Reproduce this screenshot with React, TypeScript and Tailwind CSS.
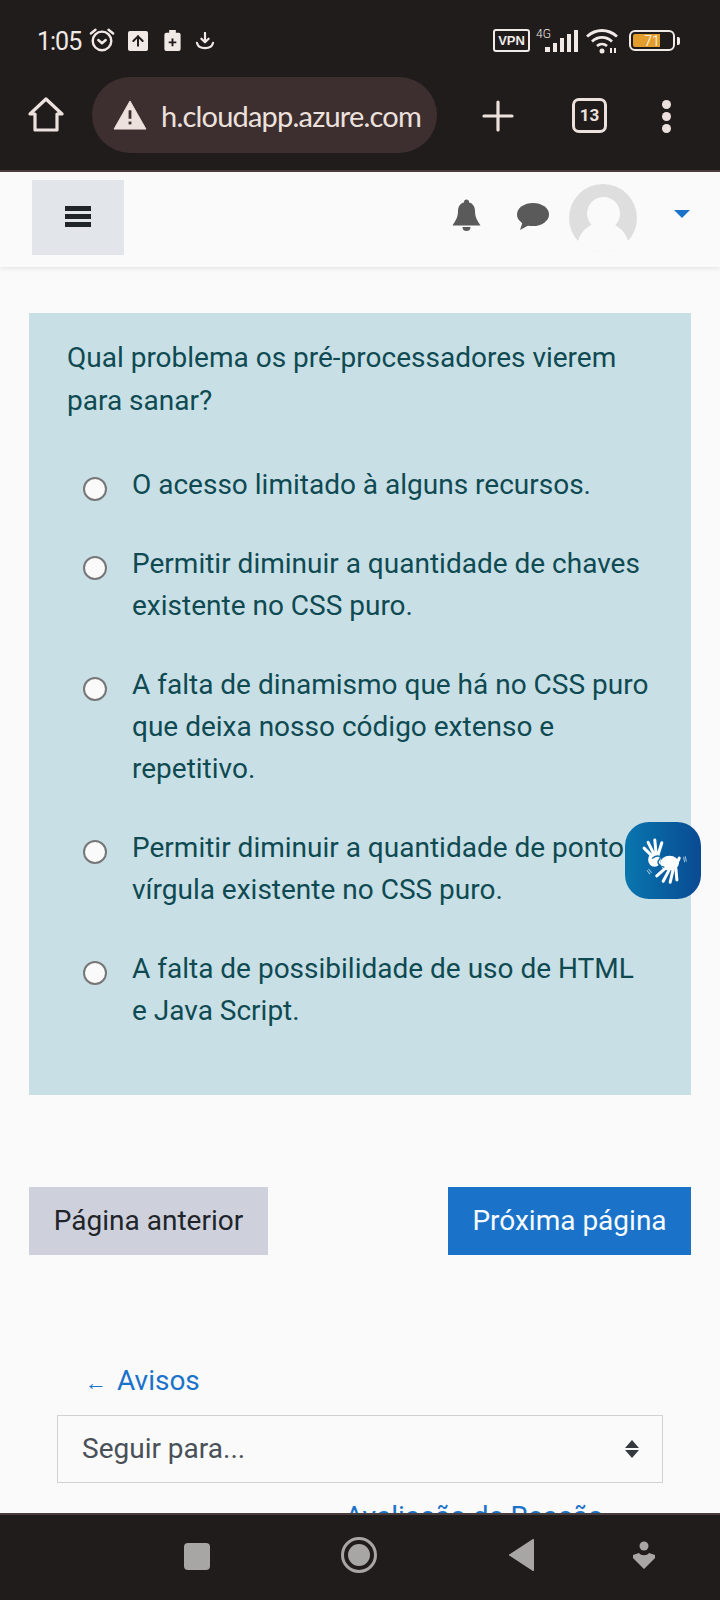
import React from "react";
import { ArrowUp, Plus } from "lucide-react";

const options = [
  "O acesso limitado à alguns recursos.",
  "Permitir diminuir a quantidade de chaves existente no CSS puro.",
  "A falta de dinamismo que há no CSS puro que deixa nosso código extenso e repetitivo.",
  "Permitir diminuir a quantidade de ponto e vírgula existente no CSS puro.",
  "A falta de possibilidade de uso de HTML e Java Script.",
];

function StatusBar() {
  return (
    <div className="h-[76px] flex items-start pt-[28px] pl-[37px] pr-[40px] text-[#f1e9e6]">
      <span className="text-[25px] leading-[28px] tracking-[-1px] font-['Roboto',sans-serif]">1:05</span>
      {/* alarme */}
      <svg className="ml-[7px] -mt-[1px] w-[28px] h-[26px]" viewBox="0 0 30 28" fill="none" stroke="currentColor" strokeWidth="2.6">
        <circle cx="15" cy="15" r="10" />
        <path d="M3 7l5-4M27 7l-5-4" strokeLinecap="round" />
        <path d="M11 14l4 3.5 4-3.5" strokeLinecap="round" strokeLinejoin="round" />
      </svg>
      <div className="ml-[12px] mt-[3px] w-[20px] h-[20px] rounded-[2px] bg-[#f1e9e6] flex items-center justify-center">
        <ArrowUp className="w-[16px] h-[16px] text-[#211c1c]" strokeWidth={3} />
      </div>
      <svg className="ml-[16px] mt-[2px] w-[17px] h-[21px]" viewBox="0 0 17 22">
        <path d="M5 0h7v3h3a2 2 0 0 1 2 2v15a2 2 0 0 1-2 2H2a2 2 0 0 1-2-2V5a2 2 0 0 1 2-2h3z" fill="currentColor" />
        <path d="M8.500 9v8M4.500 13h8" stroke="#211c1c" strokeWidth="2" />
      </svg>
      <svg className="ml-[14px] mt-[4px] w-[20px] h-[18px]" viewBox="0 0 20 20" fill="none" stroke="currentColor" strokeWidth="2.4">
        <path d="M10 1v10M6 7.500l4 4 4-4" strokeLinecap="round" strokeLinejoin="round" />
        <path d="M1 12c1 4 5 6 9 6s8-2 9-6" strokeLinecap="round" />
      </svg>
      <div className="ml-auto flex items-start">
        <div className="mt-[1px] w-[37px] h-[23px] border-2 border-[#f1e9e6] rounded-[3px] flex items-center justify-center text-[13px] font-bold leading-none font-['Liberation_Sans',sans-serif]">
          VPN
        </div>
        <div className="relative ml-[6px] w-[43px] h-[24px]">
          <span className="absolute left-0 -top-[1px] text-[12px] leading-[14px] font-light font-['Roboto',sans-serif]">4G</span>
          <div className="absolute left-[9px] bottom-0 flex items-end gap-[3px]">
            <div className="w-[5px] h-[5px] bg-[#f1e9e6]" />
            <div className="w-[4px] h-[9px] bg-[#f1e9e6]" />
            <div className="w-[4px] h-[14px] bg-[#f1e9e6]" />
            <div className="w-[4px] h-[18px] bg-[#f1e9e6]" />
            <div className="w-[4px] h-[22px] bg-[#f1e9e6]" />
          </div>
        </div>
        <svg className="ml-[6px] w-[34px] h-[26px]" viewBox="0 0 34 26" fill="none" stroke="currentColor" strokeWidth="2.8">
          <path d="M2 8.500C11 .500 23 .500 32 8.500M7 13.500c6-5.500 14-5.500 20 0M12 18c3-2.500 7-2.500 10 0" />
          <circle cx="17" cy="23" r="2.500" fill="currentColor" stroke="none" />
          <path d="M26 20v5M30 20v5" strokeWidth="2" />
        </svg>
        <div className="ml-[10px] mt-[2px] w-[46px] h-[21px] border-2 border-[#f1e9e6] rounded-[6px] p-[2px]">
          <div className="w-[27px] h-full bg-[#e39d2b] rounded-l-[2px] flex items-center justify-end text-[14px] leading-none text-[#f4e7d2] font-['Roboto',sans-serif]">
            71
          </div>
        </div>
        <div className="ml-[2px] mt-[9px] w-[3px] h-[8px] bg-[#f1e9e6] rounded-r-[2px]" />
      </div>
    </div>
  );
}

function BrowserBar() {
  return (
    <div className="h-[94px] flex items-start text-[#ede1de]">
      <svg className="ml-[28px] mt-[21px] w-[36px] h-[36px]" viewBox="0 0 36 36" fill="none" stroke="currentColor" strokeWidth="3.2" strokeLinejoin="round" strokeLinecap="round">
        <path d="M2 17L18 2l16 15h-5v16H7V17z" />
      </svg>
      <div className="ml-[28px] mt-[1px] w-[345px] h-[76px] rounded-full bg-[#3d2f2f] flex items-center pl-[21px]">
        <svg className="w-[34px] h-[30px]" viewBox="0 0 36 32">
          <path d="M18 1L35 31H1z" fill="#ede1de" stroke="#ede1de" strokeLinejoin="round" />
          <rect x="16.500" y="11" width="3" height="9" fill="#3d2f2f" />
          <rect x="16.500" y="23" width="3" height="3" fill="#3d2f2f" />
        </svg>
        <span className="ml-[14px] text-[29px] leading-none tracking-[-0.8px] font-['Lato',sans-serif]">h.cloudapp.azure.com</span>
      </div>
      <Plus className="ml-[37px] mt-[16px] w-[48px] h-[48px]" strokeWidth={1.6} />
      <div className="ml-[50px] mt-[22px] w-[35px] h-[35px] border-[3px] border-[#ede1de] rounded-[7px] flex items-center justify-center text-[17px] font-bold font-['Roboto',sans-serif]">
        13
      </div>
      <div className="ml-[55px] mt-[24px] flex flex-col gap-[3px]">
        <div className="w-[9px] h-[9px] rounded-full bg-[#ede1de]" />
        <div className="w-[9px] h-[9px] rounded-full bg-[#ede1de]" />
        <div className="w-[9px] h-[9px] rounded-full bg-[#ede1de]" />
      </div>
    </div>
  );
}

function NavBar() {
  return (
    <div className="h-[95px] bg-[#fafafa] shadow-[0_2px_4px_rgba(0,0,0,0.08)] flex items-start pl-[32px] pr-[30px]">
      <div className="mt-[8px] w-[92px] h-[75px] pb-[3px] bg-[#e2e6ea] flex flex-col items-center justify-center gap-[3px]">
        <div className="w-[26px] h-[5px] bg-[#1f2529]" />
        <div className="w-[26px] h-[5px] bg-[#1f2529]" />
        <div className="w-[26px] h-[5px] bg-[#1f2529]" />
      </div>
      <svg className="ml-auto mt-[27px] w-[29px] h-[32px]" viewBox="0 0 29 32" fill="#5a5a5a">
        <circle cx="14.500" cy="3" r="2.500" />
        <path d="M14.500 3c5.500 0 8.500 4 8.500 9 0 6 2 9 5.500 14.500H.5C4 21 6 18 6 12c0-5 3-9 8.500-9z" />
        <path d="M10.500 28h8a4 4 0 0 1-8 0z" />
      </svg>
      <svg className="ml-[36px] mt-[31px] w-[32px] h-[27px]" viewBox="0 0 32 27" fill="#5a5a5a">
        <ellipse cx="16" cy="11.500" rx="16" ry="11.500" />
        <path d="M6 18L3 27l11-6z" />
      </svg>
      <div className="relative ml-[20px] mt-[12px] w-[68px] h-[68px] rounded-full bg-[#dedede] overflow-hidden">
        <div className="absolute left-[18px] top-[13px] w-[33px] h-[33px] rounded-full bg-[#fafafa]" />
        <div className="absolute left-[8px] top-[38px] w-[52px] h-[40px] rounded-t-[26px] bg-[#fafafa]" />
        <div className="absolute left-0 top-[56px] w-full h-[12px] bg-[#fafafa]" />
      </div>
      <div className="ml-[37px] mt-[38px] w-0 h-0 border-x-[8px] border-x-transparent border-t-[8px] border-t-[#1a73c9]" />
    </div>
  );
}

function LibrasButton() {
  return (
    <div className="absolute left-[625px] top-[822px] w-[76px] h-[77px] rounded-[24px] bg-gradient-to-r from-[#0a76ae] to-[#0a4a93]">
      <svg className="w-full h-full" viewBox="195 95 225 230" fill="#fff" stroke="#fff" strokeLinecap="round">
        <g strokeWidth="9" fill="none">
          <path d="M275 197L251 173M280 190L263 156M287 190L283 149M293 192L304 157" />
        </g>
        <ellipse cx="282" cy="208" rx="19" ry="21" stroke="none" />
        <ellipse cx="327" cy="218" rx="28" ry="22" stroke="none" />
        <g strokeWidth="9" fill="none">
          <path d="M315 233L289 256M326 238L308 272M337 240L329 275M346 234L349 268M350 216L356 203" />
        </g>
        <path d="M276 203C290 192 306 196 296 208C288 216 294 226 310 230" stroke="#0a66a4" strokeWidth="4" fill="none" />
        <path d="M260 240L268 250M265 236L273 246M369 200L372 214M374 198L377 212" stroke="#9cc4dc" strokeWidth="3" fill="none" />
      </svg>
    </div>
  );
}

function Question() {
  return (
    <div className="mx-[29px] mt-[46px] h-[782px] bg-[#c8dfe5] pt-[23px] pl-[38px] pr-[37px] text-[#0f4a52] text-[28px] leading-[42px]">
      <p className="leading-[43px]">Qual problema os pré-processadores vierem para sanar?</p>
      <div className="mt-[42px] flex flex-col gap-[37px]">
        {options.map((text) => (
          <div key={text} className="flex items-start">
            <div className="ml-[16px] mt-[13px] w-[24px] h-[24px] shrink-0 rounded-full border-2 border-[#777777] bg-[#fafafa]" />
            <span className="ml-[25px]">{text}</span>
          </div>
        ))}
      </div>
    </div>
  );
}

function BottomBar() {
  return (
    <div className="relative h-[87px] shrink-0 bg-[#211c1c] border-t-2 border-t-[#4a3d3d] flex items-start">
      <div className="ml-[184px] mt-[28px] w-[26px] h-[27px] rounded-[4px] bg-[#a8a5a5]" />
      <div className="ml-[131px] mt-[22px] w-[36px] h-[36px] rounded-full border-[3px] border-[#a8a5a5] flex items-center justify-center">
        <div className="w-[22px] h-[22px] rounded-full bg-[#a8a5a5]" />
      </div>
      <svg className="ml-[132px] mt-[24px] w-[26px] h-[32px]" viewBox="0 0 26 32" fill="#a8a5a5">
        <path d="M25 1v30a1 1 0 0 1-1.500.8L1 17a1 1 0 0 1 0-2L23.500.2A1 1 0 0 1 25 1z" />
      </svg>
      <svg className="ml-[98px] mt-[26px] w-[22px] h-[28px]" viewBox="0 0 22 28" fill="#a8a5a5">
        <circle cx="11" cy="5" r="4.500" />
        <path d="M0 14l6-2c2 3 8 3 10 0l6 2v3l-11 11L0 17z" />
      </svg>
    </div>
  );
}

export default function App() {
  return (
    <div className="relative w-[720px] h-[1600px] overflow-hidden flex flex-col bg-[#fafafa] font-['Roboto',sans-serif]">
      <div className="shrink-0 bg-[#211c1c] border-b-2 border-b-[#4a3d3d]">
        <StatusBar />
        <BrowserBar />
      </div>
      <NavBar />
      <div className="flex-1 overflow-hidden">
        <Question />
        <div className="mx-[29px] mt-[92px] flex justify-between text-[28px]">
          <div className="w-[239px] h-[68px] bg-[#ced1dc] text-[#1e2429] flex items-center justify-center">Página anterior</div>
          <div className="w-[243px] h-[68px] bg-[#1a73c9] text-[#f7fbff] flex items-center justify-center">Próxima página</div>
        </div>
        <div className="ml-[85px] mt-[106px] text-[#1a73c9] text-[28px] leading-[40px]">
          <span className="text-[22px] mr-[10px]">←</span>Avisos
        </div>
        <div className="mx-[57px] mt-[12px] h-[68px] border border-[#cfd2d4] bg-[#fafafa] flex items-center justify-between pl-[24px] pr-[23px] text-[#495057] text-[28px]">
          <span>Seguir para...</span>
          <div className="flex flex-col gap-[2px]">
            <div className="w-0 h-0 border-x-[7px] border-x-transparent border-b-[8px] border-b-[#343a40]" />
            <div className="w-0 h-0 border-x-[7px] border-x-transparent border-t-[8px] border-t-[#343a40]" />
          </div>
        </div>
        <div className="mt-[14px] pl-[345px] text-[#1a73c9] text-[28px] leading-[40px] whitespace-nowrap">Avaliação de Reação</div>
      </div>
      <BottomBar />
      <LibrasButton />
    </div>
  );
}
